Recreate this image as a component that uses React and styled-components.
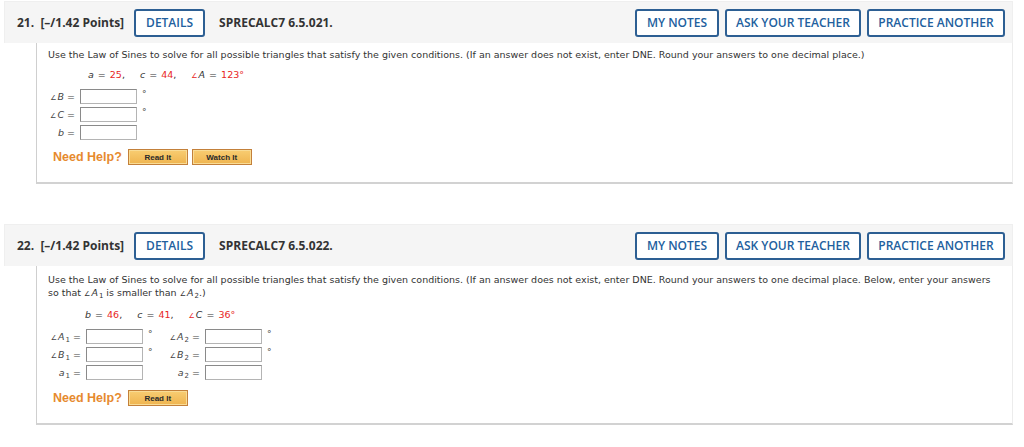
import React from 'react';
import styled, { createGlobalStyle } from 'styled-components';

const GlobalStyle = createGlobalStyle`
  body {
    margin: 0;
    background: #fff;
    font-family: "DejaVu Sans", Verdana, sans-serif;
  }
`;

const Page = styled.div`
  width: 1009px;
  padding: 1px 11px 0 4px;
`;

const Question = styled.section`
  margin-bottom: 40px;
`;

const Header = styled.div`
  height: 41px;
  background: #f5f5f5;
  border: 1px solid #efefef;
  border-bottom: none;
  display: flex;
  align-items: center;
  padding: 0 7px 0 12px;
  font-family: "Open Sans", sans-serif;
  color: #333;
`;

const Points = styled.div`
  font-weight: 700;
  font-size: 12px;
  margin-right: 10px;
  white-space: pre;
`;

const Code = styled.div`
  font-weight: 700;
  font-size: 12px;
  margin-left: 14px;
  flex: 1;
`;

const Actions = styled.div`
  display: flex;
  gap: 6px;
`;

const OutlineButton = styled.button`
  box-sizing: border-box;
  width: ${({ w }) => w}px;
  height: 28px;
  padding: 0;
  background: #fff;
  border: 2px solid #2d5f93;
  border-radius: 3px;
  color: #22609e;
  font-family: "Open Sans", sans-serif;
  font-weight: 600;
  font-size: 12px;
  cursor: pointer;
`;

const Body = styled.div`
  margin-left: 32px;
  border-left: 1px solid #cfcfcf;
  border-right: 1px solid #ececec;
  border-bottom: 2px solid #d2d2d2;
  padding: ${({ top }) => top}px 11px 17px 11px;
  color: #333;
  font-size: 9.5px;
`;

const Prompt = styled.div`
  line-height: 13px;
  max-width: 947px;
`;

const Sub = styled.sub`
  font-size: 7px;
  line-height: 0;
  vertical-align: -2px;
  margin-left: 1px;
`;

const Given = styled.div`
  margin-top: ${({ gap }) => gap}px;
  margin-left: ${({ indent }) => indent}px;
  line-height: 13px;
  word-spacing: 1px;
  span {
    color: #e8261d;
  }
`;

const Spacer = styled.span`
  display: inline-block;
  width: 15px;
`;

const AnswerGrid = styled.div`
  margin-top: 6px;
  display: grid;
  grid-template-columns: ${({ cols }) => cols};
  grid-auto-rows: 15px;
  row-gap: 3px;
  align-items: center;
`;

const Label = styled.div`
  text-align: right;
  padding-right: 5px;
  white-space: nowrap;
  color: #444;
  line-height: 15px;
  height: 15px;
`;

const Angle = styled.span`
  font-size: 7px;
  margin-right: 1px;
`;

const Input = styled.input`
  box-sizing: border-box;
  width: 57px;
  height: 15px;
  margin: 0;
  border: 1px solid #b4b4b4;
  border-top-color: #8a8a8a;
  border-left-color: #8a8a8a;
  background: #fff;
`;

const Degree = styled.div`
  align-self: start;
  padding-left: 5px;
  font-size: 9px;
  line-height: 10px;
  color: #444;
`;

const HelpRow = styled.div`
  margin-top: ${({ gap }) => gap}px;
  margin-left: 5px;
  display: flex;
  align-items: center;
  gap: 4px;
`;

const NeedHelp = styled.div`
  font-family: "Liberation Sans", Arial, sans-serif;
  font-weight: 700;
  font-size: 12.5px;
  color: #e68a2e;
  margin-right: 2px;
`;

const HelpButton = styled.button`
  box-sizing: border-box;
  width: 60px;
  height: 16px;
  padding: 0;
  border: 1px solid #c3803a;
  box-shadow: inset 0 0 0 1px #f9dc95;
  background: linear-gradient(#f8cd72, #efb44f);
  font-family: "Liberation Sans", Arial, sans-serif;
  font-weight: 700;
  font-size: 8px;
  color: #2a2a2a;
  cursor: pointer;
`;

const QuestionHeader = ({ num, code }) => (
  <Header>
    <Points>{`${num}.  [–/1.42 Points]`}</Points>
    <OutlineButton w={71}>DETAILS</OutlineButton>
    <Code>{code}</Code>
    <Actions>
      <OutlineButton w={84}>MY NOTES</OutlineButton>
      <OutlineButton w={136}>ASK YOUR TEACHER</OutlineButton>
      <OutlineButton w={138}>PRACTICE ANOTHER</OutlineButton>
    </Actions>
  </Header>
);

const Help = ({ watch, gap }) => (
  <HelpRow gap={gap}>
    <NeedHelp>Need Help?</NeedHelp>
    <HelpButton>Read It</HelpButton>
    {watch && <HelpButton>Watch It</HelpButton>}
  </HelpRow>
);

export default function App() {
  return (
    <Page>
      <GlobalStyle />
      <Question>
        <QuestionHeader num="21" code="SPRECALC7 6.5.021." />
        <Body top={5}>
          <Prompt>
            Use the Law of Sines to solve for all possible triangles that satisfy the given
            conditions. (If an answer does not exist, enter DNE. Round your answers to one
            decimal place.)
          </Prompt>
          <Given gap={7} indent={40}>
            <i>a</i> = <span>25</span>,<Spacer /><i>c</i> = <span>44</span>,<Spacer />
            <Angle>∠</Angle><i>A</i> = <span>123°</span>
          </Given>
          <AnswerGrid cols="32px 57px 1fr">
            <Label><Angle>∠</Angle><i>B</i> =</Label>
            <Input />
            <Degree>°</Degree>
            <Label><Angle>∠</Angle><i>C</i> =</Label>
            <Input />
            <Degree>°</Degree>
            <Label><i>b</i> =</Label>
            <Input />
            <Degree />
          </AnswerGrid>
          <Help watch gap={9} />
        </Body>
      </Question>
      <Question>
        <QuestionHeader num="22" code="SPRECALC7 6.5.022." />
        <Body top={7}>
          <Prompt>
            Use the Law of Sines to solve for all possible triangles that satisfy the given
            conditions. (If an answer does not exist, enter DNE. Round your answers to one
            decimal place. Below, enter your answers so that <Angle>∠</Angle><i>A</i>
            <Sub>1</Sub> is smaller than <Angle>∠</Angle><i>A</i><Sub>2</Sub>.)
          </Prompt>
          <Given gap={7} indent={37}>
            <i>b</i> = <span>46</span>,<Spacer /><i>c</i> = <span>41</span>,<Spacer />
            <Angle>∠</Angle><i>C</i> = <span>36°</span>
          </Given>
          <AnswerGrid cols="38px 57px 20px 42px 57px 1fr">
            <Label><Angle>∠</Angle><i>A</i><Sub>1</Sub> =</Label>
            <Input />
            <Degree>°</Degree>
            <Label><Angle>∠</Angle><i>A</i><Sub>2</Sub> =</Label>
            <Input />
            <Degree>°</Degree>
            <Label><Angle>∠</Angle><i>B</i><Sub>1</Sub> =</Label>
            <Input />
            <Degree>°</Degree>
            <Label><Angle>∠</Angle><i>B</i><Sub>2</Sub> =</Label>
            <Input />
            <Degree>°</Degree>
            <Label><i>a</i><Sub>1</Sub> =</Label>
            <Input />
            <Degree />
            <Label><i>a</i><Sub>2</Sub> =</Label>
            <Input />
            <Degree />
          </AnswerGrid>
          <Help gap={10} />
        </Body>
      </Question>
    </Page>
  );
}
